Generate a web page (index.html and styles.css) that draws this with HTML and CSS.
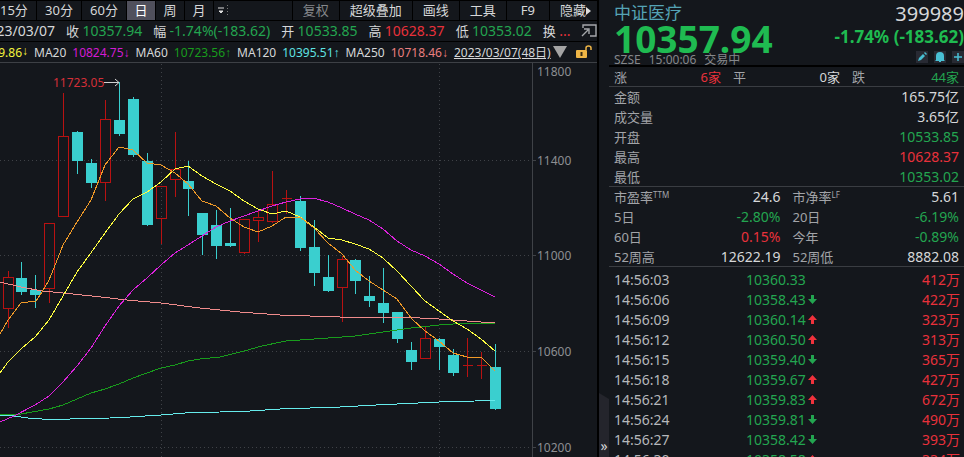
FILE: index.html
```html
<!DOCTYPE html>
<html lang="zh-CN">
<head>
<meta charset="UTF-8">
<meta name="viewport" content="width=device-width, initial-scale=1.0">
<title>中证医疗 399989</title>
<link rel="stylesheet" href="styles.css">
</head>
<body>
<div class="app">
    <main class="chart-panel">
        <!-- 周期工具栏 -->
        <nav class="toolbar">
            <button class="tab tab-first">15分</button>
            <button class="tab tab-wide">30分</button>
            <button class="tab tab-wide">60分</button>
            <button class="tab active">日</button>
            <button class="tab">周</button>
            <button class="tab">月</button>
            <button class="tab more" aria-label="更多周期"><svg width="14" height="14" viewBox="0 0 14 14"><path d="M3 4h6M4 7h4L6 9z" stroke="#ddd" fill="#ddd"/><path d="M12.5 1v12" stroke="#777" stroke-dasharray="1 2"/></svg></button>
            <span class="spacer"></span>
            <button class="tab tool dim">复权</button>
            <button class="tab tool">超级叠加</button>
            <button class="tab tool">画线</button>
            <button class="tab tool">工具</button>
            <button class="tab tool">F9</button>
            <button class="tab tool last">隐藏<svg width="5" height="8" viewBox="0 0 5 8"><path d="M0 0l5 4-5 4z" fill="#ddd"/></svg></button>
        </nav>

        <div class="quote-line">
            <span class="date">2023/03/07</span>
            <span>收 <b class="green">10357.94</b></span>
            <span>幅 <b class="green">-1.74%(-183.62)</b></span>
            <span>开 <b class="green">10533.85</b></span>
            <span>高 <b class="red">10628.37</b></span>
            <span>低 <b class="green">10353.02</b></span>
            <span>换 <b class="red">...</b></span>
            <button class="icon-btn popout" aria-label="弹出窗口"><svg width="16" height="14" viewBox="0 0 16 14" fill="none" stroke="#a5a7aa" stroke-width="1.4"><path d="M2 4V1h13v11H9M1 12l6-6M3 5h5v5"/></svg></button>
        </div>

        <div class="ma-line">
            <span class="ma10">10599.86<i>↓</i></span>
            <span>MA20</span><span class="ma20">10824.75<i>↓</i></span>
            <span>MA60</span><span class="ma60">10723.56<i>↑</i></span>
            <span>MA120</span><span class="ma120">10395.51<i>↑</i></span>
            <span>MA250</span><span class="ma250">10718.46<i>↓</i></span>
            <a href="#" class="range">2023/03/07(48日)</a>
            <button class="icon-btn expand" aria-label="展开"><svg width="14" height="13" viewBox="0 0 14 13"><path d="M0 0h14L7 12z" fill="#a4a4a4"/></svg></button>
            <button class="icon-btn lock" aria-label="锁定"><svg width="16" height="14" viewBox="0 0 16 14"><rect x="0" y="5" width="11" height="8" rx="1" fill="#eeb546"/><path d="M10 5V3q0-2 2.500-2T15 3v2" fill="none" stroke="#eeb546" stroke-width="1.500"/><path d="M5.500 7v4" stroke="#3b2d14" stroke-width="2"/></svg></button>
        </div>

        <svg class="chart" id="chart" viewBox="0 63 597 394" preserveAspectRatio="xMinYMin meet">
            <g class="grid">
                <path d="M0 160.500H532M0 255.500H532M0 351.500H532M0 447.500H532"/>
                <path d="M161.500 64V457M439.500 64V457"/>
            </g>
            <path class="axis" d="M532.500 63V457M532 160.500h4M532 255.500h4M532 351.500h4M532 447.500h4"/>
            <g class="axis-text">
                <text x="537" y="76">11800</text>
                <text x="537" y="165">11400</text>
                <text x="537" y="260">11000</text>
                <text x="537" y="356">10600</text>
                <text x="537" y="452">10200</text>
            </g>
            <g id="candles"></g>
            <g id="lines"></g>
            <text class="peak" x="53" y="87">11723.05</text>
            <path class="peak-arrow" d="M104 82.500h15M115 79l4 3.500-4 3.500"/>
        </svg>
    </main>

    <div class="divider">
        <button class="collapse" aria-label="收起侧栏">»</button>
    </div>

    <aside class="side-panel">
        <header class="head">
            <div class="head-left">
                <h1>中证医疗</h1>
                <strong class="price">10357.94</strong>
                <p class="state"><span>SZSE</span><span>15:00:06</span><span>交易中</span></p>
            </div>
            <div class="head-right">
                <span class="code">399989</span>
                <strong class="change">-1.74% (-183.62)</strong>
                <div class="actions">
                    <button aria-label="编辑"><svg width="12" height="12" viewBox="0 0 12 12" fill="#48bfd3"><path d="M2 10l1-3 4-4 2 2-4 4zM8 2l1-1 2 2-1 1z"/></svg></button>
                    <button aria-label="提醒"><svg width="12" height="12" viewBox="0 0 12 12" fill="#48bfd3"><path d="M2 9V5q0-4 4-4t4 4v4l1 1H1zM5 10h2v1H5z"/></svg></button>
                    <button aria-label="添加"><svg width="12" height="12" viewBox="0 0 12 12"><path d="M6 2v8M2 6h8" stroke="#48bfd3" stroke-width="1.500"/></svg></button>
                </div>
            </div>
        </header>

        <dl class="breadth">
            <div><dt>涨</dt><dd class="red">6家</dd></div>
            <div><dt>平</dt><dd>0家</dd></div>
            <div><dt>跌</dt><dd class="green">44家</dd></div>
        </dl>

        <dl class="stats">
            <div><dt>金额</dt><dd>165.75亿</dd></div>
            <div><dt>成交量</dt><dd>3.65亿</dd></div>
            <div><dt>开盘</dt><dd class="green">10533.85</dd></div>
            <div><dt>最高</dt><dd class="red">10628.37</dd></div>
            <div><dt>最低</dt><dd class="green">10353.02</dd></div>
        </dl>

        <dl class="stats two-col">
            <div><dt>市盈率<sup>TTM</sup></dt><dd>24.6</dd></div>
            <div><dt>市净率<sup>LF</sup></dt><dd>5.61</dd></div>
            <div><dt>5日</dt><dd class="green">-2.80%</dd></div>
            <div><dt>20日</dt><dd class="green">-6.19%</dd></div>
            <div><dt>60日</dt><dd class="red">0.15%</dd></div>
            <div><dt>今年</dt><dd class="green">-0.89%</dd></div>
            <div><dt>52周高</dt><dd>12622.19</dd></div>
            <div><dt>52周低</dt><dd>8882.08</dd></div>
        </dl>

        <table class="ticks">
            <tbody id="ticks"></tbody>
        </table>
    </aside>
</div>
<script src="chart.js"></script>
</body>
</html>
```

FILE: styles.css
```css
* {
    box-sizing: border-box;
}
body {
    margin: 0;
    background: #14171c;
    color: #d6d7d9;
    font-family: "Noto Sans", "Noto Sans CJK SC", sans-serif;
    font-size: 14px;
    overflow: hidden;
}
button {
    font: inherit;
    color: inherit;
    background: none;
    border: 0;
    padding: 0;
    cursor: pointer;
}
h1, p, dl, dd {
    margin: 0;
}
b {
    font-weight: normal;
}
svg {
    display: block;
}
.green {
    color: #23a550;
}
.red {
    color: #e8313b;
}
.app {
    display: flex;
    height: 100vh;
}

/* 左侧K线区 */
.chart-panel {
    flex: 1;
    min-width: 0;
    display: flex;
    flex-direction: column;
    overflow: hidden;
}
.toolbar {
    display: flex;
    flex: none;
    height: 21px;
    border-top: 1px solid #000;
    border-bottom: 1px solid #000;
    font-size: 13px;
}
.tab {
    width: 29px;
    flex: none;
    display: flex;
    align-items: center;
    justify-content: center;
    border-right: 1px solid #000;
    line-height: 19px;
    white-space: nowrap;
}
.tab-first {
    width: 37px;
    justify-content: flex-start;
}
.tab-wide {
    width: 45px;
}
.tab.active {
    background: #50505c;
    color: #fff;
}
.tab.more {
    width: 16px;
    border-right: 0;
}
.spacer {
    flex: 1;
    border-right: 1px solid #000;
}
.tab.tool {
    width: auto;
    padding: 0 10px;
}
.tab.tool:nth-last-child(2) {
    padding: 0 14px;
}
.tab.last {
    border-right: 0;
    padding-right: 6px;
}
.dim {
    color: #85878b;
}
.quote-line,
.ma-line {
    display: flex;
    flex: none;
    align-items: center;
    height: 21px;
    white-space: nowrap;
}
.quote-line {
    gap: 11px;
    font-size: 13px;
    line-height: 20px;
    border-bottom: 1px solid #000;
}
.quote-line b {
    font-size: 14px;
}
/* 日期左侧被裁切 */
.date {
    width: 55px;
    display: flex;
    justify-content: flex-end;
    font-size: 14px;
}
.popout {
    margin-left: auto;
    margin-right: 4px;
}
.ma-line {
    gap: 6px;
    font-size: 12px;
    border-bottom: 1px solid #3d4045;
}
.ma-line i {
    font-family: "Liberation Sans", sans-serif;
    font-style: normal;
}
.ma10 {
    width: 28px;
    display: flex;
    justify-content: flex-end;
    color: #f4f43c;
}
.ma20 { color: #d31bd3; }
.ma60 { color: #189c1c; }
.ma120 { color: #5fe3e3; }
.ma250 { color: #ea7f7f; }
.range {
    color: #d6d7d9;
}
.expand {
    margin-left: -4px;
}
.lock {
    margin-left: auto;
    margin-right: 5px;
}
.chart {
    flex: 1;
    min-height: 0;
    width: 100%;
}
.grid path {
    stroke: #3f4247;
    stroke-dasharray: 1 3;
}
.axis {
    stroke: #3f4247;
    fill: none;
}
.axis-text {
    fill: #8d8f93;
    font-size: 12px;
}
.peak {
    fill: #d42f38;
    font-size: 12px;
}
.peak-arrow {
    stroke: #d0d0d0;
    fill: none;
}
.candle-up {
    fill: none;
    stroke: #b81212;
}
.candle-down {
    fill: #3acfcf;
    stroke: #3acfcf;
}
.line {
    fill: none;
    stroke-width: 1;
    shape-rendering: crispEdges;
}
.line-ma5 { stroke: #f09a28; }
.line-ma10 { stroke: #ffff40; }
.line-ma20 { stroke: #dd22dd; }
.line-ma60 { stroke: #189c1c; }
.line-ma120 { stroke: #66ecec; }
.line-ma250 { stroke: #f08c8c; }

/* 中间分隔条 */
.divider {
    width: 12px;
    flex: none;
    display: flex;
    align-items: flex-end;
    border-left: 2px solid #000;
    background: #14171c;
}
.collapse {
    width: 10px;
    height: 64px;
    padding-top: 42px;
    background: #24252c;
    clip-path: polygon(0 0, 100% 6px, 100% 100%, 0 100%);
    line-height: 20px;
}

/* 右侧行情 */
.side-panel {
    width: 355px;
    flex: none;
    overflow: hidden;
}
.head {
    display: flex;
    justify-content: space-between;
    height: 67px;
    padding-left: 5px;
    border-bottom: 2px solid #000;
}
.head-left,
.head-right {
    display: flex;
    flex-direction: column;
}
.head-right {
    align-items: flex-end;
}
.head h1 {
    font-size: 17px;
    font-weight: normal;
    line-height: 26px;
    color: #55a3b5;
}
.price {
    font-size: 37px;
    line-height: 25px;
    color: #1fbb51;
}
.state {
    display: flex;
    gap: 8px;
    font-size: 12px;
    line-height: 17px;
    color: #85878b;
}
.code {
    font-size: 20px;
    line-height: 28px;
}
.change {
    font-size: 17px;
    line-height: 18px;
    color: #1fbb51;
}
.actions {
    display: flex;
    gap: 6px;
    padding-top: 5px;
}
.actions button {
    background: #282a33;
}
dt {
    color: #a2a4a8;
    font-size: 13px;
}
dd {
    font-size: 14px;
}
.breadth,
.stats {
    padding: 0 5px;
    box-shadow: inset 0 -1px #3a3d42;
}
.breadth {
    display: flex;
    gap: 12px;
}
.breadth dd {
    font-size: 13px;
}
.breadth div,
.stats div {
    flex: 1;
    display: flex;
    justify-content: space-between;
    line-height: 20px;
    height: 20px;
    white-space: nowrap;
}
.two-col {
    display: grid;
    grid-template-columns: 1fr 1fr;
    column-gap: 12px;
}
sup {
    font-size: 8px;
    line-height: 1;
    vertical-align: 4px;
}
.ticks {
    width: 100%;
    margin-top: 3px;
    border-collapse: collapse;
    line-height: 20px;
}
.ticks td {
    height: 20px;
    padding: 0;
    white-space: nowrap;
}
.ticks .time {
    width: 137px;
    padding-left: 5px;
    color: #b6b8bb;
}
.ticks .vol {
    text-align: right;
    padding-right: 4px;
}
.tick-price {
    display: flex;
    align-items: center;
    gap: 2px;
}
```

FILE: chart.js
```js
// [x, 实体上, 实体下, 影线上, 影线下, 涨=1]
const candles = [
    [8, 277, 308, 271, 328, 1],
    [21, 278, 291, 262, 295, 0],
    [35, 290, 294, 275, 308, 0],
    [49, 223, 288, 223, 303, 1],
    [63, 136, 216, 93, 216, 1],
    [77, 132, 160, 131, 174, 0],
    [91, 163, 182, 159, 188, 0],
    [105, 119, 182, 100, 201, 1],
    [119, 120, 133, 82, 136, 0],
    [133, 99, 154, 97, 157, 0],
    [147, 161, 224, 153, 226, 0],
    [161, 186, 218, 186, 244, 1],
    [175, 169, 179, 132, 197, 1],
    [188, 181, 188, 161, 216, 0],
    [202, 213, 234, 213, 255, 0],
    [216, 225, 245, 210, 259, 0],
    [230, 243, 245, 208, 247, 0],
    [244, 219, 252, 219, 254, 1],
    [258, 217, 220, 209, 242, 1],
    [272, 204, 221, 171, 223, 1],
    [286, 198, 198, 190, 214, 1],
    [300, 201, 247, 196, 251, 0],
    [314, 247, 272, 220, 286, 0],
    [328, 277, 290, 255, 292, 0],
    [342, 259, 287, 256, 322, 1],
    [355, 260, 280, 259, 294, 0],
    [369, 296, 300, 276, 307, 0],
    [383, 303, 312, 268, 323, 0],
    [397, 312, 338, 312, 343, 0],
    [411, 350, 361, 342, 370, 0],
    [425, 338, 358, 327, 358, 1],
    [439, 339, 346, 338, 370, 0],
    [453, 355, 372, 349, 376, 0],
    [467, 365, 365, 338, 377, 1],
    [481, 365, 365, 352, 379, 1],
    [495, 367, 408, 344, 410, 0]
];

// 均线
const lines = {
    ma250: '0,282 21,287 42,291 63,293 92,296 127,300 161,303 200,308 240,312 280,315 340,317 400,317 439,319 467,321 495,323',
    ma120: '0,415 14,416 28,418 42,419 70,419 110,418 130,417 161,415 185,413 220,412 250,411 280,409 340,407 376,405 418,403 439,402 475,401 495,400',
    ma60: '0,415 21,414 49,409 63,405 77,399 91,393 105,389 119,384 133,378 147,373 161,368 175,365 188,361 200,359 220,357 244,351 262,346 286,341 314,339 342,337 355,336 383,332 411,328 439,325 467,323 495,323',
    ma20: '0,422 14,416 35,405 49,396 63,382 77,366 91,348 105,326 119,306 133,290 147,278 161,265 175,253 188,245 202,236 216,227 230,221 244,216 258,211 272,206 286,202 300,199 313,198 328,202 342,208 355,214 369,220 383,229 397,241 411,250 425,256 439,264 453,274 467,283 481,290 495,297',
    ma10: '0,373 8,362 21,349 35,337 49,320 63,296 77,272 93,250 105,233 119,214 133,199 147,192 161,182 175,169 188,166 202,176 216,184 230,191 244,201 258,209 272,214 286,211 300,217 314,227 328,238 342,240 355,244 369,249 383,258 397,271 411,286 425,301 439,311 453,321 467,329 481,339 495,351',
    ma5: '0,334 8,320 21,303 36,301 42,292 49,280 56,263 63,245 77,222 91,200 105,165 119,147 133,150 147,163 161,165 175,173 188,184 202,201 216,206 230,218 244,227 258,232 272,226 286,217 300,217 314,228 328,243 342,254 355,270 369,281 383,290 397,299 411,318 425,331 439,341 453,353 467,357 481,357 495,371'
};

const ticks = [
    ['14:56:03', '10360.33', '', '412万'],
    ['14:56:06', '10358.43', 'down', '422万'],
    ['14:56:09', '10360.14', 'up', '323万'],
    ['14:56:12', '10360.50', 'up', '313万'],
    ['14:56:15', '10359.40', 'down', '365万'],
    ['14:56:18', '10359.67', 'up', '427万'],
    ['14:56:21', '10359.83', 'up', '672万'],
    ['14:56:24', '10359.81', 'down', '490万'],
    ['14:56:27', '10358.42', 'down', '393万'],
    ['14:56:30', '10358.58', 'up', '334万']
];

const arrows = {
    '': '',
    up: '<svg width="9" height="10" viewBox="0 0 9 10"><path d="M4.5 0L9 5H6v4H3V5H0z" fill="#f0323c"/></svg>',
    down: '<svg width="9" height="10" viewBox="0 0 9 10"><path d="M4.5 9L9 4H6V0H3v4H0z" fill="#23a550"/></svg>'
};

document.getElementById('candles').innerHTML = candles.map(([x, top, bottom, high, low, up]) => {
    const c = x + 0.5;
    return `<path class="${up ? 'candle-up' : 'candle-down'}" shape-rendering="crispEdges" d="M${c} ${high}V${top + 0.5}M${c} ${bottom + 0.5}V${low}M${c - 5} ${top + 0.5}h10V${bottom + 0.5}h-10z"/>`;
}).join('');

document.getElementById('lines').innerHTML = Object.entries(lines).map(([name, points]) =>
    `<polyline class="line line-${name}" points="${points}"/>`
).join('');

document.getElementById('ticks').innerHTML = ticks.map(([time, price, dir, vol]) =>
    `<tr><td class="time">${time}</td><td><span class="tick-price green">${price}${arrows[dir]}</span></td><td class="vol red">${vol}</td></tr>`
).join('');
```
